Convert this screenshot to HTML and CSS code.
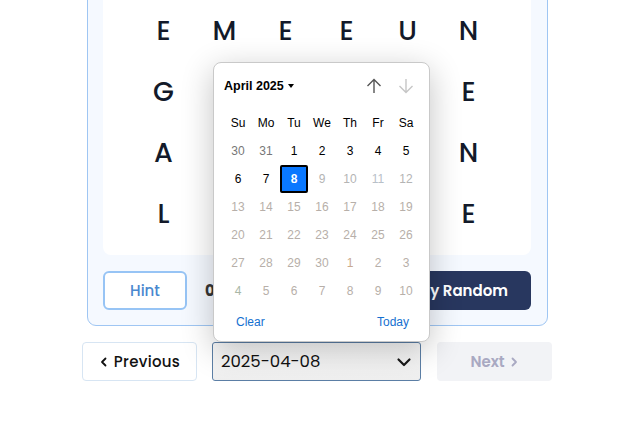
FILE: index.html
```html
<!DOCTYPE html>
<html lang="en">
<head>
<meta charset="utf-8">
<title>Word Puzzle</title>
<link rel="stylesheet" href="styles.css">
</head>
<body>
<div class="stage">
  <div class="card">
    <div class="board">
      <div class="grid">
        <span>E</span><span>M</span><span>E</span><span>E</span><span>U</span><span>N</span>
        <span>G</span><span>R</span><span>A</span><span>P</span><span>H</span><span>E</span>
        <span>A</span><span>T</span><span>O</span><span>I</span><span>S</span><span>N</span>
        <span>L</span><span>I</span><span>D</span><span>E</span><span>R</span><span>E</span>
      </div>
    </div>
    <div class="actions">
      <button class="btn-hint">Hint</button>
      <span class="found">0/6 found</span>
      <button class="btn-random">Play Random</button>
    </div>
  </div>

  <div class="nav">
    <button class="btn-prev"><svg class="chev" viewBox="0 0 10 10" width="10" height="10"><path d="M6.5 1.5 3 5l3.5 3.5" fill="none" stroke="#111" stroke-width="1.8" stroke-linecap="round" stroke-linejoin="round"/></svg>Previous</button>
    <div class="date-select">
      <span>2025-04-08</span>
      <svg viewBox="0 0 16 16" width="16" height="16"><path d="M2.5 5.5 8 11l5.5-5.5" fill="none" stroke="#1a1a1a" stroke-width="2.2" stroke-linecap="round" stroke-linejoin="round"/></svg>
    </div>
    <button class="btn-next" disabled>Next<svg class="chev" viewBox="0 0 10 10" width="10" height="10"><path d="M3.5 1.5 7 5 3.5 8.5" fill="none" stroke="#a9a9c2" stroke-width="1.8" stroke-linecap="round" stroke-linejoin="round"/></svg></button>
  </div>

  <div class="picker">
    <div class="picker-head">
      <div class="month">April 2025<span class="caret"></span></div>
      <div class="arrows">
        <span class="arrow up"><svg viewBox="0 0 18 18" width="18" height="18"><path d="M9 16V2.5M2.5 9 9 2.5 15.5 9" fill="none" stroke="#555" stroke-width="1.4"/></svg></span>
        <span class="arrow down"><svg viewBox="0 0 18 18" width="18" height="18"><path d="M9 2v13.5M2.5 9 9 15.5 15.5 9" fill="none" stroke="#c6c6c6" stroke-width="1.4"/></svg></span>
      </div>
    </div>
    <div class="days">
      <span class="wd">Su</span><span class="wd">Mo</span><span class="wd">Tu</span><span class="wd">We</span><span class="wd">Th</span><span class="wd">Fr</span><span class="wd">Sa</span>
      <span class="prev">30</span><span class="prev">31</span><span>1</span><span>2</span><span>3</span><span>4</span><span>5</span>
      <span>6</span><span>7</span><span class="sel">8</span><span class="off">9</span><span class="off">10</span><span class="off blue">11</span><span class="off">12</span>
      <span class="dis">13</span><span class="dis">14</span><span class="dis">15</span><span class="dis">16</span><span class="dis">17</span><span class="dis">18</span><span class="dis">19</span>
      <span class="dis">20</span><span class="dis">21</span><span class="dis">22</span><span class="dis">23</span><span class="dis">24</span><span class="dis">25</span><span class="dis">26</span>
      <span class="dis">27</span><span class="dis">28</span><span class="dis">29</span><span class="dis">30</span><span class="dis warm">1</span><span class="dis">2</span><span class="dis">3</span>
      <span class="dis green">4</span><span class="dis">5</span><span class="dis">6</span><span class="dis">7</span><span class="dis">8</span><span class="dis">9</span><span class="dis">10</span>
    </div>
    <div class="picker-foot">
      <span class="link">Clear</span>
      <span class="link">Today</span>
    </div>
  </div>
</div>
</body>
</html>
```
FILE: styles.css
```css
* { box-sizing: border-box; }
html, body { margin: 0; padding: 0; background: #fff; }
body { overflow: hidden; height: 435px; }

.stage {
  position: relative;
  display: flow-root;
  width: 632px;
  font-family: "Poppins", "Inter", "Liberation Sans", sans-serif;
}

.card {
  width: 461px;
  margin: -26px 0 0 87px;
  padding: 15px 16px 15px 15px;
  background: #f5f9ff;
  border: 1px solid #9fc6f3;
  border-radius: 9px;
}

.board {
  background: #fff;
  border-radius: 8px;
  padding: 10px 32px 11px 30px;
}

.grid {
  display: grid;
  grid-template-columns: repeat(6, 61px);
  grid-auto-rows: 61px;
}
.grid span {
  display: flex;
  align-items: center;
  justify-content: center;
  font-size: 27px;
  font-weight: 500;
  color: #131a2a;
}

.actions {
  margin-top: 16px;
  display: flex;
  align-items: center;
  height: 39px;
}
.btn-hint {
  width: 84px;
  height: 39px;
  border: 2px solid #97c4f5;
  border-radius: 6px;
  background: #fff;
  color: #4a88cf;
  font-family: inherit;
  font-size: 15px;
  font-weight: 500;
}
.found {
  margin-left: 18px;
  font-size: 15px;
  font-weight: 700;
  color: #363636;
}
.btn-random {
  margin-left: auto;
  height: 39px;
  padding: 0 23px;
  border: 0;
  border-radius: 6px;
  background: #28375f;
  color: #fff;
  font-family: inherit;
  font-size: 15px;
  font-weight: 600;
  white-space: nowrap;
}

.nav {
  margin: 16px 0 0 82px;
  display: flex;
  gap: 15px;
  height: 39px;
}
.nav button, .date-select { height: 39px; }
.btn-prev {
  width: 115px;
  display: flex;
  align-items: center;
  justify-content: center;
  gap: 5px;
  background: #fff;
  border: 1px solid #d7e5f3;
  border-radius: 4px;
  font-family: inherit;
  font-size: 15px;
  font-weight: 500;
  color: #111;
  letter-spacing: 0.3px;
}
.date-select {
  width: 209px;
  display: flex;
  align-items: center;
  justify-content: space-between;
  padding: 0 8px 0 8px;
  border: 1px solid #5c7fa6;
  border-radius: 3px;
  background: linear-gradient(#fbfbfb, #efefef);
  font-size: 16.5px;
  color: #111;
}
.btn-next {
  width: 115px;
  margin-left: 1px;
  display: flex;
  align-items: center;
  justify-content: center;
  gap: 4px;
  background: #f2f3f6;
  border: 0;
  border-radius: 4px;
  font-family: inherit;
  font-size: 15px;
  font-weight: 600;
  color: #a9a9c2;
}

.picker {
  position: absolute;
  left: 213px;
  top: 62px;
  width: 217px;
  height: 280px;
  background: #fff;
  border: 1px solid #c9c9c9;
  border-radius: 8px;
  box-shadow: 0 8px 32px rgba(0, 0, 0, 0.24);
  font-family: "Liberation Sans", Arial, sans-serif;
  font-size: 12px;
  color: #000;
}
.picker-head {
  height: 46px;
  display: flex;
  align-items: center;
  justify-content: space-between;
  padding: 0 9px 0 10px;
}
.month {
  font-weight: 700;
  font-size: 12.5px;
  display: flex;
  align-items: center;
  gap: 4px;
}
.caret {
  width: 0; height: 0;
  border-left: 3.5px solid transparent;
  border-right: 3.5px solid transparent;
  border-top: 4px solid #000;
}
.arrows { display: flex; gap: 4px; }
.arrow {
  width: 28px;
  height: 28px;
  display: flex;
  align-items: center;
  justify-content: center;
}
.days {
  margin-left: 10px;
  display: grid;
  grid-template-columns: repeat(7, 28px);
  grid-auto-rows: 28px;
}
.days span {
  display: flex;
  align-items: center;
  justify-content: center;
}
.days .wd { color: #000; }
.days .prev { color: #777; }
.days .off { color: #b4b4b4; }
.days .off.blue { color: #b8c0c8; }
.days .dis { color: #b7afa9; }
.days .warm { color: #c9a98f; }
.days .green { color: #a9b7a6; }
.days .sel {
  background: #0a78ff;
  color: #fff;
  font-weight: 700;
  border: 2px solid #000;
  border-radius: 2px;
}
.picker-foot {
  height: 34px;
  display: flex;
  align-items: center;
  justify-content: space-between;
  padding: 0 20px 0 22px;
}
.link { color: #1570d0; }
```
